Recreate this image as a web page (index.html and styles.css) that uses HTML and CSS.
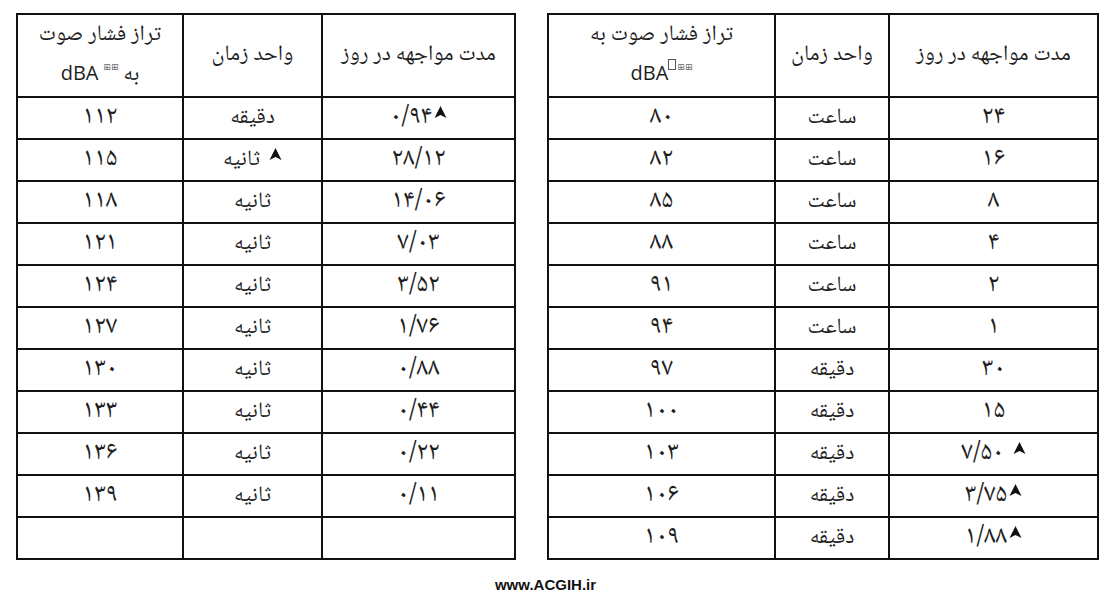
FILE: index.html
```html
<!DOCTYPE html>
<html lang="fa">
<head>
<meta charset="utf-8">
<title>ACGIH</title>
<link rel="stylesheet" href="styles.css">
</head>
<body>
<div class="page">
  <div class="tables">
    <table class="tbl tbl-right" dir="rtl">
      <colgroup><col class="r1"><col class="r2"><col class="r3"></colgroup>
      <thead>
        <tr class="head">
          <th>مدت مواجهه در روز</th>
          <th>واحد زمان</th>
          <th class="two">تراز فشار صوت به<br><span class="lat" dir="ltr">dBA<sup class="note"><span class="box"></span>⊞⊞</sup></span></th>
        </tr>
      </thead>
      <tbody>
        <tr><td>۲۴</td><td>ساعت</td><td>۸۰</td></tr>
        <tr><td>۱۶</td><td>ساعت</td><td>۸۲</td></tr>
        <tr><td>۸</td><td>ساعت</td><td>۸۵</td></tr>
        <tr><td>۴</td><td>ساعت</td><td>۸۸</td></tr>
        <tr><td>۲</td><td>ساعت</td><td>۹۱</td></tr>
        <tr><td>۱</td><td>ساعت</td><td>۹۴</td></tr>
        <tr><td>۳۰</td><td>دقیقه</td><td>۹۷</td></tr>
        <tr><td>۱۵</td><td>دقیقه</td><td>۱۰۰</td></tr>
        <tr><td><svg class="mark sp" viewBox="0 0 10 10"><path d="M5 0 L10 10 L5 7.6 L0 10 Z"/></svg>۷/۵۰</td><td>دقیقه</td><td>۱۰۳</td></tr>
        <tr><td><svg class="mark" viewBox="0 0 10 10"><path d="M5 0 L10 10 L5 7.6 L0 10 Z"/></svg>۳/۷۵</td><td>دقیقه</td><td>۱۰۶</td></tr>
        <tr><td><svg class="mark" viewBox="0 0 10 10"><path d="M5 0 L10 10 L5 7.6 L0 10 Z"/></svg>۱/۸۸</td><td>دقیقه</td><td>۱۰۹</td></tr>
      </tbody>
    </table>
    <table class="tbl tbl-left" dir="rtl">
      <colgroup><col class="l1"><col class="l2"><col class="l3"></colgroup>
      <thead>
        <tr class="head">
          <th>مدت مواجهه در روز</th>
          <th>واحد زمان</th>
          <th class="two">تراز فشار صوت<br>به <sup class="note">⊞⊞</sup> <span class="lat">dBA</span></th>
        </tr>
      </thead>
      <tbody>
        <tr><td><svg class="mark" viewBox="0 0 10 10"><path d="M5 0 L10 10 L5 7.6 L0 10 Z"/></svg>۰/۹۴</td><td>دقیقه</td><td>۱۱۲</td></tr>
        <tr><td>۲۸/۱۲</td><td><svg class="mark sp" viewBox="0 0 10 10"><path d="M5 0 L10 10 L5 7.6 L0 10 Z"/></svg>ثانیه</td><td>۱۱۵</td></tr>
        <tr><td>۱۴/۰۶</td><td>ثانیه</td><td>۱۱۸</td></tr>
        <tr><td>۷/۰۳</td><td>ثانیه</td><td>۱۲۱</td></tr>
        <tr><td>۳/۵۲</td><td>ثانیه</td><td>۱۲۴</td></tr>
        <tr><td>۱/۷۶</td><td>ثانیه</td><td>۱۲۷</td></tr>
        <tr><td>۰/۸۸</td><td>ثانیه</td><td>۱۳۰</td></tr>
        <tr><td>۰/۴۴</td><td>ثانیه</td><td>۱۳۳</td></tr>
        <tr><td>۰/۲۲</td><td>ثانیه</td><td>۱۳۶</td></tr>
        <tr><td>۰/۱۱</td><td>ثانیه</td><td>۱۳۹</td></tr>
        <tr><td></td><td></td><td></td></tr>
      </tbody>
    </table>
  </div>
  <div class="footer">www.ACGIH.ir</div>
</div>
</body>
</html>
```
FILE: styles.css
```css
html, body {
  margin: 0;
  padding: 0;
  background: #ffffff;
}

.page {
  padding: 13px 19px 0 16px;
}

.tables {
  display: flex;
  flex-direction: row-reverse;
  gap: 31px;
}

.tbl {
  border-collapse: collapse;
  table-layout: fixed;
  font-family: "Noto Naskh Arabic", "Amiri", "FreeSerif", "DejaVu Sans", serif;
  color: #1e1e1e;
}

.tbl-right { width: 550px; }
.tbl-left { width: 498px; }

.r1 { width: 209px; }
.r2 { width: 114px; }
.r3 { width: 227px; }
.l1 { width: 193px; }
.l2 { width: 139px; }
.l3 { width: 166px; }

.tbl th,
.tbl td {
  border: 2px solid #111;
  text-align: center;
  vertical-align: middle;
  padding: 0 4px;
  font-size: 22px;
  font-weight: normal;
  line-height: 1.2;
}

.tbl td:nth-child(odd) {
  font-size: 26px;
}

.tbl .head { height: 83px; }
.tbl tbody tr { height: 42px; }

.tbl th.two {
  line-height: 37px;
}

.lat {
  font-family: "Open Sans", "Liberation Sans", sans-serif;
  font-size: 20px;
}

.note {
  font-family: "DejaVu Sans", sans-serif;
  font-size: 9px;
  color: #666;
  vertical-align: 10px;
  line-height: 0;
}

.box {
  display: inline-block;
  width: 6px;
  height: 9px;
  border: 1px solid #555;
  margin-right: 1px;
  vertical-align: 0;
}

.mark {
  width: 13px;
  height: 12px;
  fill: #111;
  vertical-align: 5px;
  margin-left: 2px;
}

.mark.sp { margin-left: 9px; }

.footer {
  margin-top: 17px;
  padding-right: 24px;
  text-align: center;
  font-family: "Liberation Sans", Arial, sans-serif;
  font-weight: bold;
  font-size: 15px;
  line-height: 16px;
  color: #111;
}
```
